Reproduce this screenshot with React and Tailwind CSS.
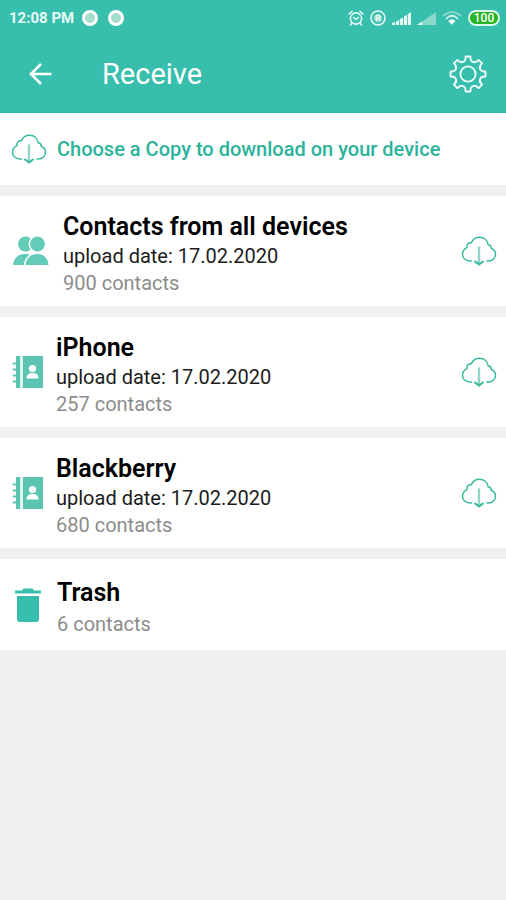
const copies = [
  { name: 'Contacts from all devices', date: '17.02.2020', count: 900, icon: 'people' },
  { name: 'iPhone', date: '17.02.2020', count: 257, icon: 'book' },
  { name: 'Blackberry', date: '17.02.2020', count: 680, icon: 'book' },
];

const polar = (radius, degrees) => {
  const angle = (degrees * Math.PI) / 180;
  return `${(19 + radius * Math.sin(angle)).toFixed(2)} ${(19 - radius * Math.cos(angle)).toFixed(2)}`;
};

// eight teeth with a flat tip and a curved valley between them
const gearPath =
  [0, 45, 90, 135, 180, 225, 270, 315]
    .map((a, i) => `${i === 0 ? 'M' : 'L'}${polar(17.6, a - 8)}L${polar(17.6, a + 8)}C${polar(12, a + 10)} ${polar(12, a + 35)} ${polar(17.6, a + 37)}`)
    .join('') + 'Z';

function GearIcon() {
  return (
    <svg className="size-[38px]" viewBox="0 0 38 38" fill="none" stroke="#f0fcf9" strokeWidth="1.9" strokeLinejoin="round">
      <path d={gearPath} />
      <circle cx="19" cy="19" r="7.6" />
    </svg>
  );
}

function CloudDownload() {
  return (
    <svg className="w-9 h-[30px] shrink-0" viewBox="0 0 36 30" fill="none" stroke="#38b99f" strokeWidth="1.5" strokeLinecap="round">
      <path d="M10.5 25H9C4.5 25 1.5 22 1.5 18.3C1.5 15 3.5 12.7 6 11.6C5.4 8.5 7.6 6.3 10.4 6.7C12 3 15 1.2 18.4 1.2C23 1.2 26.6 4.2 27.2 8.8C29.5 9.2 30.2 10.8 30.2 12.2C33 13.3 34.5 15.6 34.5 18.3C34.5 22 31.5 25 27.5 25H26" />
      <path d="M18 11.5V26" strokeWidth="2.4" stroke="#8fd6c7" />
      <path d="M14 25.5L18 28.4L22 25.5" strokeWidth="2" />
    </svg>
  );
}

function PeopleIcon() {
  return (
    <svg className="w-[37px] h-[30px]" viewBox="0 0 37 30" fill="#62ccb9">
      <circle cx="13.5" cy="8" r="7.5" />
      <path d="M1 29C2 21 7 18 13.5 18S22 21 24 29Z" />
      <g stroke="#ffffff" strokeWidth="1.5">
        <circle cx="25.5" cy="8" r="8.2" />
        <path d="M12.4 29.7C13.5 21 19 17.2 25.5 17.2S36.5 21 37.5 29.7Z" />
      </g>
    </svg>
  );
}

function BookIcon() {
  return (
    <svg className="w-[31px] h-[32px]" viewBox="0 0 31 32">
      <path d="M4 0H8V32H4ZM11 0H31V32H11Z" fill="#5cc4b2" />
      <path d="M8 0H11V32H8Z" fill="#dff4f0" />
      <path d="M1.500 7.5H5M1.500 13.500H5M1.500 19.500H5M1.500 25.500H5" stroke="#5cc4b2" strokeWidth="1.8" strokeLinecap="round" />
      <circle cx="20.5" cy="12.5" r="3.6" fill="#ffffff" />
      <path d="M14.5 22.5C14.5 18.5 17 17 20.5 17S26.5 18.5 26.5 22.5Z" fill="#ffffff" />
    </svg>
  );
}

function TrashIcon() {
  return (
    <svg className="w-[26px] h-[34px]" viewBox="0 0 26 34" fill="#38beac">
      <path d="M0 2.5H7L8.5 0.5H17.5L19 2.5H26V5.5H0Z" />
      <path d="M2 8H24V31C24 32.7 23 34 21 34H5C3 34 2 32.7 2 31Z" />
    </svg>
  );
}

function StatusIcons() {
  return (
    <div className="flex items-center">
      <svg className="w-4 h-4" viewBox="0 0 16 16" fill="none" stroke="#e4f8f2" strokeWidth="1.6" strokeLinecap="round">
        <circle cx="8" cy="8.5" r="5.6" />
        <path d="M1 4L4 1.3M15 4L12 1.3M3.5 13.5L2.5 15M12.5 13.5L13.5 15M5.8 7.5L8 9.5L10.5 7.5" />
      </svg>
      <svg className="w-4 h-4 ml-[6px]" viewBox="0 0 16 16" fill="none" stroke="#e4f8f2">
        <circle cx="8" cy="8" r="7" strokeWidth="1.6" />
        <circle cx="8" cy="8" r="4" fill="#a9e0d4" stroke="none" />
        <path d="M6.5 11V5.5H8.6C10.200 5.5 10.200 8.2 8.6 8.2H6.5M8.5 8.2L10 11" strokeWidth="1.1" />
      </svg>
      <svg className="w-5 h-4 ml-[6px]" viewBox="0 0 20 16" fill="#e4f8f2">
        <path d="M0 15V13L3.200 12V15ZM4 15V11.5L7.200 10V15ZM8 15V9L11.200 7.5V15ZM12 15V6.5L15.200 4.5V15ZM16 15V4L19 2V15Z" />
      </svg>
      <svg className="w-5 h-4 ml-[5px]" viewBox="0 0 20 16">
        <path d="M0 15L19 2V15Z" fill="#8ad8ca" />
        <path d="M0 15L5 11.6V15Z" fill="#e4f8f2" />
      </svg>
      <svg className="w-5 h-4 ml-[5px]" viewBox="0 0 20 16" fill="none" strokeLinecap="round" strokeWidth="1.8">
        <path d="M1.5 5.5C6.5 1 13.5 1 18.5 5.5" stroke="#8ad8ca" />
        <path d="M4.3 8.3C7.8 5.2 12.2 5.2 15.7 8.3" stroke="#cdf0e8" />
        <path d="M7 11C9 9.5 11 9.5 13 11L10 14Z" fill="#ffffff" stroke="#ffffff" strokeWidth="1" />
      </svg>
      <div className="ml-[6px] w-8 h-4 rounded-full border-2 border-[#d9f5ec] bg-[#22b422] text-white text-[12px] leading-3 font-medium text-center">
        100
      </div>
    </div>
  );
}

export default function App() {
  return (
    <div className="min-h-screen bg-[#f0f0f0] font-['Roboto',sans-serif]">
      <header className="bg-[#38beac] text-white border-b border-[#2fae9c] shadow-sm">
        <div className="h-[35px] pl-[9px] pr-[6px] flex items-center justify-between">
          <div className="flex items-center">
            <span className="text-[15px] leading-4 font-bold text-[#e8faf5]">12:08 PM</span>
            <span className="ml-2 size-4 rounded-full border-3 border-white bg-[#a5dccb]"></span>
            <span className="ml-[10px] size-4 rounded-full border-3 border-white bg-[#a5dccb]"></span>
          </div>
          <StatusIcons />
        </div>
        <div className="h-[77px] pl-7 pr-[19px] flex items-center">
          <button aria-label="Back" className="cursor-pointer">
            <svg className="w-6 h-6" viewBox="0 0 24 24" fill="none" stroke="currentColor" strokeWidth="2.6">
              <path d="M23.5 12H3M13 2L3 12L13 22" />
            </svg>
          </button>
          <h1 className="ml-[50px] flex-1 text-[29px] leading-8">Receive</h1>
          <button aria-label="Settings" className="cursor-pointer">
            <GearIcon />
          </button>
        </div>
      </header>

      <main className="flex flex-col gap-[11px]">
        <div className="h-[72px] bg-white pl-[11px] flex items-center gap-[10px]">
          <CloudDownload />
          <p className="text-[20px] leading-6 font-medium text-[#2bb39b]">Choose a Copy to download on your device</p>
        </div>

        {copies.map((copy) => (
          <section key={copy.name} className="bg-white pl-3 pr-[9px] flex items-center">
            <div className={copy.icon === 'people' ? 'w-[51px] shrink-0' : 'w-11 shrink-0'}>
              {copy.icon === 'people' ? <PeopleIcon /> : <BookIcon />}
            </div>
            <div className="flex-1 pt-[14px] pb-[9px]">
              <h2 className="text-[25px] leading-[33px] font-semibold text-black">{copy.name}</h2>
              <p className="text-[20px] leading-[27px] text-[#1c1c1c]">upload date: {copy.date}</p>
              <p className="text-[20px] leading-[27px] text-[#8c8c8c]">{copy.count} contacts</p>
            </div>
            <button aria-label={`Download ${copy.name}`} className="cursor-pointer">
              <CloudDownload />
            </button>
          </section>
        ))}

        <section className="bg-white pl-[15px] flex items-center">
          <div className="w-[42px] shrink-0">
            <TrashIcon />
          </div>
          <div className="pt-4 pb-3">
            <h2 className="text-[25px] leading-9 font-semibold text-black">Trash</h2>
            <p className="text-[20px] leading-[27px] text-[#8c8c8c]">6 contacts</p>
          </div>
        </section>
      </main>
    </div>
  );
}
